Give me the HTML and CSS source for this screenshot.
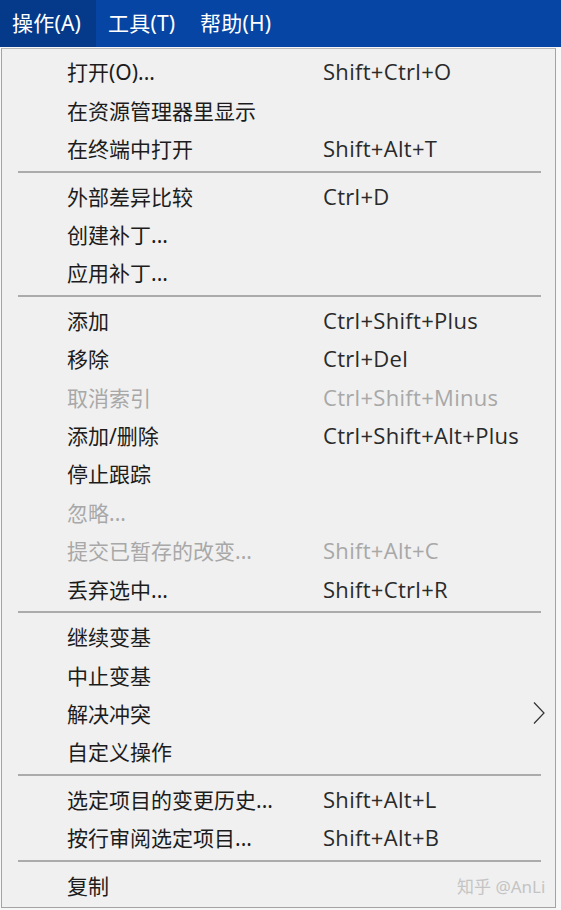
FILE: index.html
```html
<!DOCTYPE html>
<html lang="zh-CN">
<head>
<meta charset="utf-8">
<title>操作菜单</title>
<link rel="stylesheet" href="styles.css">
</head>
<body>
<nav class="menubar">
  <div class="menubar-item active">操作(A)</div>
  <div class="menubar-item tools">工具(T)</div>
  <div class="menubar-item">帮助(H)</div>
</nav>
<div class="menu">
  <div class="item"><span class="label">打开(O)...</span><span class="key">Shift+Ctrl+O</span></div>
  <div class="item"><span class="label">在资源管理器里显示</span><span class="key"></span></div>
  <div class="item"><span class="label">在终端中打开</span><span class="key">Shift+Alt+T</span></div>
  <div class="sep"></div>
  <div class="item"><span class="label">外部差异比较</span><span class="key">Ctrl+D</span></div>
  <div class="item"><span class="label">创建补丁...</span><span class="key"></span></div>
  <div class="item"><span class="label">应用补丁...</span><span class="key"></span></div>
  <div class="sep"></div>
  <div class="item"><span class="label">添加</span><span class="key">Ctrl+Shift+Plus</span></div>
  <div class="item"><span class="label">移除</span><span class="key">Ctrl+Del</span></div>
  <div class="item disabled"><span class="label">取消索引</span><span class="key">Ctrl+Shift+Minus</span></div>
  <div class="item"><span class="label">添加/删除</span><span class="key">Ctrl+Shift+Alt+Plus</span></div>
  <div class="item"><span class="label">停止跟踪</span><span class="key"></span></div>
  <div class="item disabled"><span class="label">忽略...</span><span class="key"></span></div>
  <div class="item disabled"><span class="label">提交已暂存的改变...</span><span class="key">Shift+Alt+C</span></div>
  <div class="item"><span class="label">丢弃选中...</span><span class="key">Shift+Ctrl+R</span></div>
  <div class="sep"></div>
  <div class="item"><span class="label">继续变基</span><span class="key"></span></div>
  <div class="item"><span class="label">中止变基</span><span class="key"></span></div>
  <div class="item"><span class="label">解决冲突</span><span class="key"></span>
    <svg class="arrow" width="12" height="22" viewBox="0 0 12 22"><path d="M1 0.5 L11 11 L1 21.5" fill="none" stroke="#333" stroke-width="1.2"/></svg>
  </div>
  <div class="item"><span class="label">自定义操作</span><span class="key"></span></div>
  <div class="sep"></div>
  <div class="item"><span class="label">选定项目的变更历史...</span><span class="key">Shift+Alt+L</span></div>
  <div class="item"><span class="label">按行审阅选定项目...</span><span class="key">Shift+Alt+B</span></div>
  <div class="sep"></div>
  <div class="item last"><span class="label">复制</span><span class="key"></span>
    <span class="watermark">知乎 @AnLi</span>
  </div>
</div>
</body>
</html>
```

FILE: styles.css
```css
html, body {
  margin: 0;
  padding: 0;
}
body {
  background: #f7f7f7;
  width: 561px;
  height: 910px;
  overflow: hidden;
  font-family: "Open Sans", "Noto Sans", "Noto Sans CJK SC", sans-serif;
}
.menubar {
  display: flex;
  height: 47px;
  background: #0645a3;
}
.menubar-item {
  color: #ffffff;
  font-size: 21px;
  line-height: 46px;
  padding-left: 12px;
  font-family: "Noto Sans", "Noto Sans CJK SC", sans-serif;
  letter-spacing: 0.2px;
  box-sizing: border-box;
}
.menubar-item.active {
  background: #053a8b;
  width: 96px;
}
.menubar-item.tools {
  width: 92px;
}
.menu {
  margin-left: 1px;
  width: 555px;
  height: 860px;
  box-sizing: border-box;
  background: #f0f0f0;
  border: 1px solid #a3a3a3;
  border-top-color: #b8b8b8;
  padding-top: 3px;
  margin-top: 1px;
}
.item {
  position: relative;
  display: grid;
  grid-template-columns: 256px 1fr;
  align-items: center;
  height: 38.4px;
  padding-left: 65px;
  font-size: 21px;
  color: #1c1c1c;
}
.label {
  font-family: "Noto Sans", "Noto Sans CJK SC", sans-serif;
  white-space: nowrap;
}
.key {
  font-family: "Open Sans", "Noto Sans", sans-serif;
  font-size: 22px;
  letter-spacing: 0.3px;
  white-space: nowrap;
  color: #2a2a2a;
}
.item.disabled .label,
.item.disabled .key {
  color: #a8a8a8;
}
.sep {
  height: 9.2px;
  display: flex;
  align-items: center;
  padding-left: 16px;
  padding-right: 14px;
}
.sep::before {
  content: "";
  display: block;
  flex: 1;
  height: 2px;
  background: #ababab;
}
.arrow {
  position: absolute;
  left: 531px;
  top: 8px;
}
.watermark {
  position: absolute;
  left: 455px;
  top: 7px;
  font-size: 17px;
  color: #c4c4c4;
  font-family: "Noto Sans", "Noto Sans CJK SC", sans-serif;
}
```
